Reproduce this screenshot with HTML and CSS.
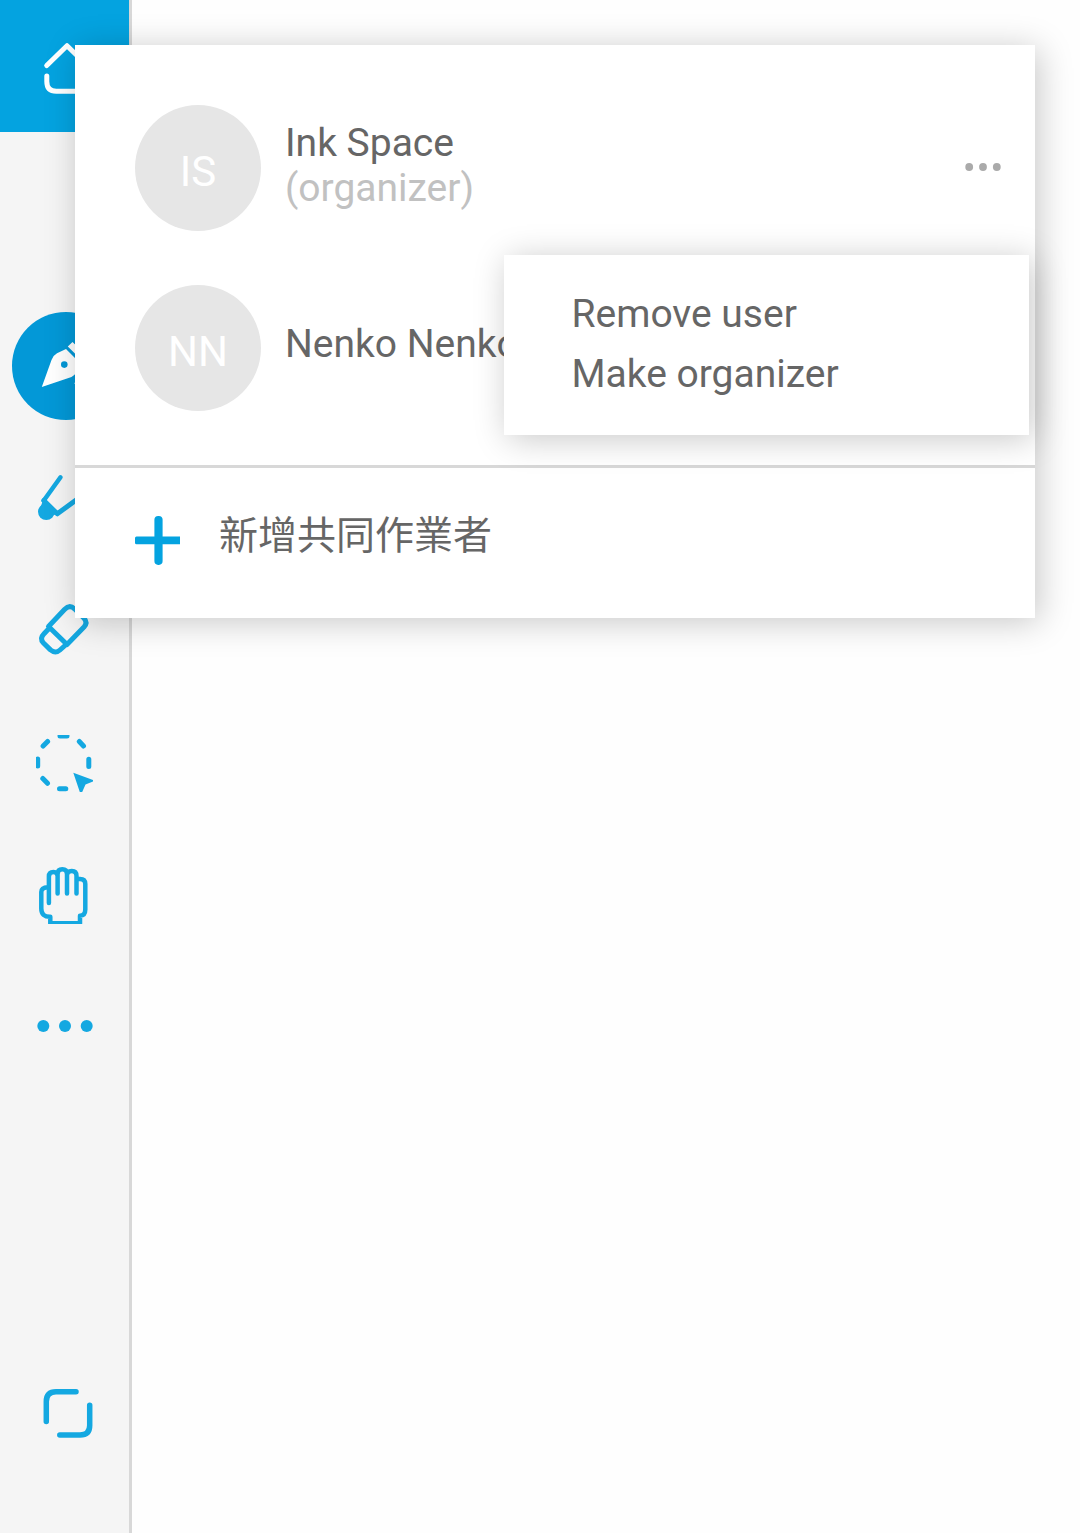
FILE: index.html
```html
<!DOCTYPE html>
<html lang="zh-Hant">
<head>
<meta charset="utf-8">
<title>Ink Space</title>
<link rel="stylesheet" href="styles.css">
</head>
<body>
<div class="app">
  <nav class="toolbar">
    <div class="tool home">
      <svg class="icon home-icon" viewBox="0 0 129 132"><path d="M46.7 65.5 67 45.7 87.3 65.5M46.8 76v5.500q0 9.800 9.500 9.800h21.400q9.500 0 9.500-9.800V76"/></svg>
    </div>
    <div class="tool-group">
      <div class="tool">
        <svg class="icon" viewBox="0 0 129 132">
          <circle class="pen-disc" cx="66" cy="66" r="54"/>
          <path class="pen-nib" d="M41.8 87 51.500 60Q53 55.500 57 53.300L66 49 81 64Q78 73 71.500 77ZM67.800 46.500 72.500 42 88 57 83 61.500ZM74 83.500 76 81.500H90V83.500Z"/>
          <circle class="pen-disc" cx="64.300" cy="64.600" r="3.300"/>
        </svg>
      </div>
      <div class="tool">
        <svg class="icon" viewBox="0 0 129 132">
          <path class="line" d="M60.500 45.300 43.800 68.500"/>
          <path class="line thick" d="M43.800 68.500 57.300 81.800 84 62.300"/>
          <path class="solid" d="M43 68 58 82 49 84 40 77Z"/>
          <circle class="solid" cx="46.300" cy="79.800" r="8.300"/>
        </svg>
      </div>
      <div class="tool">
        <svg class="icon" viewBox="0 0 129 132">
          <path class="line thick" d="M48.500 62.500 64.500 45.500Q69.500 40.300 74.500 44.800L84 54.200Q88 58.500 84 63L67 80.500ZM49 64.500 43.800 70Q39.300 74.500 43.500 79L50.500 85.900Q55.500 90 60 86L65 81.500"/>
        </svg>
      </div>
      <div class="tool">
        <svg class="icon" viewBox="0 0 129 132">
          <svg x="36" y="39" width="60" height="58" viewBox="36 39 60 58">
            <path class="line thick" d="M60 39.900h7M79.300 45.500l4.200 4.500M88.800 63.200v7.300M59.500 92.800h6.300M42.800 82.500l4.700 4.800M37.700 63v7M47.600 45.500l-4.500 4.500"/>
            <path class="solid" d="M73.300 76.700 93 84v1.500l-7.500 3L82.200 96h-2.400Z"/>
          </svg>
        </svg>
      </div>
      <div class="tool">
        <svg class="icon" viewBox="0 0 129 132">
          <svg x="36" y="39" width="54" height="57" viewBox="36 39 54 57">
            <path class="line" d="M48.900 75V48.500Q48.900 44 53.500 44 57.600 44 57.600 48V65.500 46Q57.600 41.300 62.300 41.300 67 41.300 67 46V65.500 47Q67 43 71.800 43 76.500 43 76.500 48V65.500 51H80Q85.300 51 85.300 56V81.500Q85.300 87.500 80 87.800V95.200H50.300V88.800Q41.300 89 41.300 80.500V64Q41.300 59.500 48 59.200"/>
          </svg>
        </svg>
      </div>
      <div class="tool">
        <svg class="icon" viewBox="0 0 129 132">
          <g class="solid"><circle cx="43.300" cy="66" r="6"/><circle cx="65" cy="66" r="6"/><circle cx="86.700" cy="66" r="6"/></g>
        </svg>
      </div>
    </div>
    <div class="tool expand">
      <svg class="icon" viewBox="0 0 129 132">
        <path class="line heavy" d="M46.300 74.500V54.500Q46.300 44.700 56 44.700H76M89.700 58.300V78.500Q89.700 88 80 88H59.800"/>
      </svg>
    </div>
  </nav>

  <section class="popover">
    <ul class="members">
      <li class="member">
        <span class="avatar">IS</span>
        <span class="name with-role">Ink Space<br><span class="role">(organizer)</span></span>
        <svg class="more" viewBox="0 0 36 8"><circle cx="4.200" cy="4" r="3.900"/><circle cx="18" cy="4" r="3.900"/><circle cx="31.800" cy="4" r="3.900"/></svg>
      </li>
      <li class="member">
        <span class="avatar">NN</span>
        <span class="name">Nenko Nenkov</span>
      </li>
    </ul>
    <div class="add">
      <svg class="plus" viewBox="0 0 45 50"><rect x="19.400" y="0.900" width="8.200" height="49" rx="3.800"/><path d="M1.500 21.400H45v7.800H1.500Q0 29.200 0 27.700V22.900Q0 21.400 1.500 21.400Z"/></svg>
      <span class="add-label">新增共同作業者</span>
    </div>
    <div class="menu">
      <div>Remove user</div>
      <div>Make organizer</div>
    </div>
  </section>
</div>
</body>
</html>
```
FILE: styles.css
```css
* {
  box-sizing: border-box;
}

body {
  margin: 0;
  background: #fefefe;
  color: #666;
  font: 39px/45px Roboto, "Noto Sans CJK TC", sans-serif;
}

.app {
  position: relative;
  height: 1533px;
  overflow: hidden;
}

.toolbar {
  display: flex;
  flex-direction: column;
  width: 132px;
  height: 100%;
  padding-bottom: 54px;
  background: #f5f5f5;
  border-right: 3px solid #d8d8d8;
}

.tool {
  height: 132px;
}

.icon {
  display: block;
  width: 129px;
  height: 132px;
}

.home {
  background: #04a3e0;
}

.home-icon {
  fill: none;
  stroke: #fff;
  stroke-width: 5;
  stroke-linecap: round;
  stroke-linejoin: round;
}

.tool-group {
  margin-top: 168px;
}

.expand {
  margin-top: auto;
}

.line {
  fill: none;
  stroke: #14a8e1;
  stroke-width: 4.5;
  stroke-linecap: round;
  stroke-linejoin: round;
}

.thick {
  stroke-width: 5;
}

.heavy {
  stroke-width: 5.5;
}

.solid {
  fill: #14a8e1;
}

.pen-disc {
  fill: #0398d7;
}

.pen-nib {
  fill: #fff;
}

.popover,
.menu {
  position: absolute;
  background: #fff;
  box-shadow: 4px 4px 32px rgba(0, 0, 0, 0.22);
}

.popover {
  top: 45px;
  left: 75px;
  width: 960px;
}

.members {
  display: flex;
  flex-direction: column;
  gap: 54px;
  margin: 0;
  padding: 60px 33px 54px 60px;
  list-style: none;
  border-bottom: 3px solid #d8d8d8;
}

.member {
  display: flex;
  align-items: center;
  height: 126px;
}

.avatar {
  width: 126px;
  height: 126px;
  margin-right: 24px;
  padding-top: 4px;
  border-radius: 50%;
  background: #e6e6e6;
  color: #fff;
  font-size: 42px;
  line-height: 126px;
  text-align: center;
}

.name {
  padding-bottom: 7px;
  white-space: nowrap;
}

.with-role {
  padding-bottom: 4px;
}

.role {
  color: #c1c1c1;
}

.more {
  width: 36px;
  height: 8px;
  margin: 0 1px 3px auto;
  fill: #aaa;
}

.add {
  display: flex;
  align-items: flex-start;
  gap: 39px;
  height: 150px;
  padding: 47px 60px 0;
}

.plus {
  width: 45px;
  height: 50px;
  fill: #04a3e0;
}

.add-label {
  font-family: "Noto Sans CJK TC", sans-serif;
  margin-top: -5px;
}

.menu {
  top: 210px;
  left: 429px;
  width: 525px;
  height: 180px;
  padding: 29px 67.5px;
  line-height: 60px;
}
```
